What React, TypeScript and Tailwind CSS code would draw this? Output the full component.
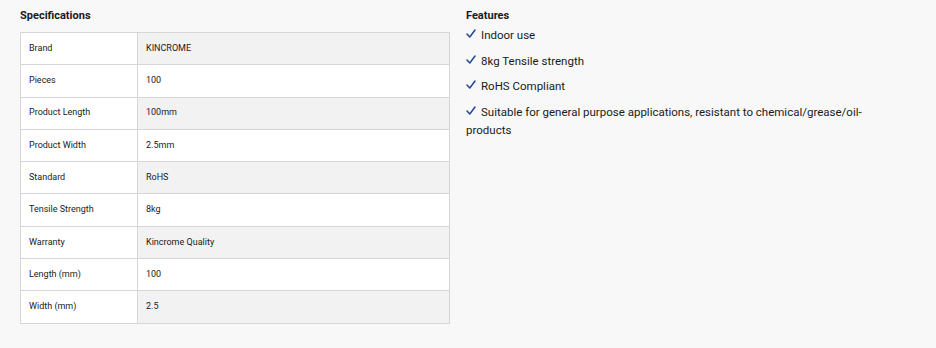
import React from "react";

const rows: [string, string][] = [
  ["Brand", "KINCROME"],
  ["Pieces", "100"],
  ["Product Length", "100mm"],
  ["Product Width", "2.5mm"],
  ["Standard", "RoHS"],
  ["Tensile Strength", "8kg"],
  ["Warranty", "Kincrome Quality"],
  ["Length (mm)", "100"],
  ["Width (mm)", "2.5"],
];

const features = [
  "Indoor use",
  "8kg Tensile strength",
  "RoHS Compliant",
  "Suitable for general purpose applications, resistant to chemical/grease/oil-products",
];

function Check() {
  return (
    <svg
      width="10"
      height="9"
      viewBox="0 0 10 9"
      className="inline-block align-baseline mr-[5px] mb-[1px]"
    >
      <path d="M1 5 L3.8 8 L9 1" fill="none" stroke="#24488f" strokeWidth="1.5" strokeLinecap="round" strokeLinejoin="round" />
    </svg>
  );
}

export default function App() {
  return (
    <div
      className="w-[936px] h-[348px] bg-[#f8f8f8] text-[#1a1a1a] px-[20px] pt-[8px] flex gap-[16px]"
      style={{ fontFamily: "Roboto, 'Liberation Sans', sans-serif" }}
    >
      <div className="w-[430px]">
        <h2 className="text-[11px] font-bold leading-[16px] mb-[8px]">Specifications</h2>
        <table className="w-[430px] border-collapse text-[9px]">
          <tbody>
            {rows.map(([k, v], i) => (
              <tr key={k} className="h-[32.3px]">
                <td className="w-[117px] border border-[#d6d6d6] bg-white pl-[8px] align-middle">{k}</td>
                <td
                  className={`border border-[#d6d6d6] pl-[8px] align-middle ${
                    i % 2 === 0 ? "bg-[#f2f2f2]" : "bg-white"
                  }`}
                >
                  {v}
                </td>
              </tr>
            ))}
          </tbody>
        </table>
      </div>
      <div className="w-[430px]">
        <h2 className="text-[11px] font-bold leading-[16px]">Features</h2>
        <ul className="text-[11.5px] leading-[18px] mt-[2px] flex flex-col gap-[7.5px]">
          {features.map((f) => (
            <li key={f}>
              <Check />
              {f}
            </li>
          ))}
        </ul>
      </div>
    </div>
  );
}
